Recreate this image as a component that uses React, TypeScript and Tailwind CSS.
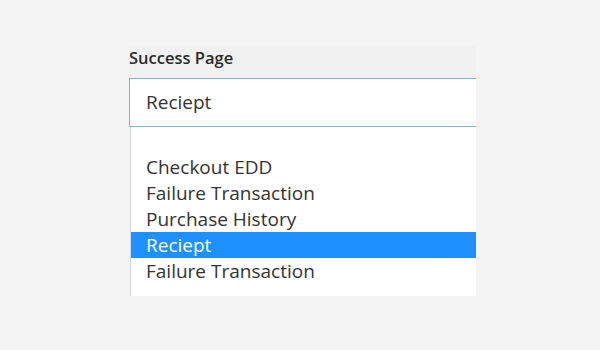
import React from "react";

const OPCIONES = [
  "",
  "Checkout EDD",
  "Failure Transaction",
  "Purchase History",
  "Reciept",
  "Failure Transaction",
];

const SELECCIONADA = 4;

export default function App() {
  return (
    <div
      className="h-[350px] w-[600px] overflow-hidden bg-[#f4f4f4] text-[#2b2b2b]"
      style={{ fontFamily: '"Open Sans", "Noto Sans", sans-serif' }}
    >
      <div className="ml-[129px] w-[347px] overflow-hidden pt-[46px]">
        <div className="h-[32px] w-full bg-[#f1f1f1]">
          <label className="block text-[16.5px] font-semibold leading-[24px] text-[#2a2a2a]">
            Success Page
          </label>
        </div>
        <div className="flex h-[49px] w-[400px] items-center border border-[#86aed6] bg-white pl-[16px] text-[19px] text-[#333]">
          Reciept
        </div>
        <div className="ml-[1px] w-[400px] border-l border-[#d6d6d6] bg-white pt-[1px] pb-[12px]">
          {OPCIONES.map((o, i) => (
            <div
              key={i}
              className={`h-[26px] pl-[15px] text-[19px] leading-[26px] ${
                i === SELECCIONADA ? "bg-[#1e90ff] text-white" : "text-[#333]"
              }`}
            >
              {o}
            </div>
          ))}
        </div>
      </div>
    </div>
  );
}
